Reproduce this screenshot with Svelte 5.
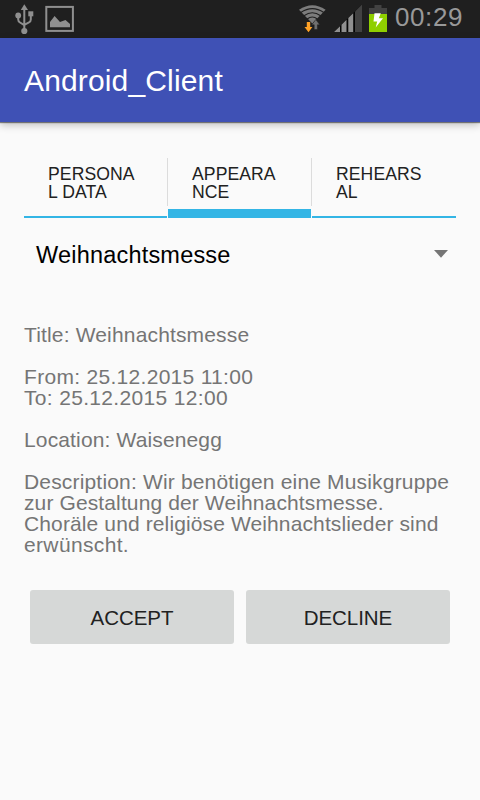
<script>
  const tabs = [
    { label: 'PERSONA\nL DATA', active: false },
    { label: 'APPEARA\nNCE', active: true },
    { label: 'REHEARS\nAL', active: false }
  ];
  const details = [
    { text: 'Title: Weihnachtsmesse', spacing: 0.16 },
    { text: '', spacing: 0 },
    { text: 'From: 25.12.2015 11:00', spacing: 0.3 },
    { text: 'To: 25.12.2015 12:00', spacing: 0.33 },
    { text: '', spacing: 0 },
    { text: 'Location: Waisenegg', spacing: 0.14 },
    { text: '', spacing: 0 },
    { text: 'Description: Wir benötigen eine Musikgruppe', spacing: 0.17 },
    { text: 'zur Gestaltung der Weihnachtsmesse.', spacing: 0.12 },
    { text: 'Choräle und religiöse Weihnachtslieder sind', spacing: 0.12 },
    { text: 'erwünscht.', spacing: 0.35 }
  ];
</script>

<div class="screen">
  <div class="status">
    <svg width="100" height="38" viewBox="0 0 100 38">
      <g fill="#8f8f8f">
        <path d="M24.3 4.3L28 10H20.8Z" />
        <circle cx="24.3" cy="31" r="3.1" />
        <circle cx="18.2" cy="15.5" r="2.9" />
        <rect x="28.3" y="11.3" width="5" height="5" />
      </g>
      <path d="M24.3 8V30M18.2 16V19.5Q18.2 21.5 20 22.5L24.3 25.2M30.8 16V19.5Q30.8 21.5 29 22.3L24.3 24.8" fill="none" stroke="#8f8f8f" stroke-width="2" />
      <rect x="46.3" y="6.9" width="26.6" height="24" fill="none" stroke="#8f8f8f" stroke-width="2" />
      <path d="M50 27.3V22L54.6 16L60 22L65.5 20L70 24V27.3Z" fill="#8f8f8f" />
    </svg>
    <svg class="right" width="98" height="38" viewBox="294 0 98 38">
      <path d="M299 9.8Q312.3 .6 325.6 9.8L312.3 23.6Z" fill="#7c7c7c" />
      <g fill="none" stroke="#1f1f1f" stroke-width="1.1">
        <path d="M300.8 12.5Q312.3 4.8 323.8 12.5" />
        <path d="M304 15.8Q312.3 9.8 320.6 15.8" />
        <path d="M307.2 19Q312.3 15 317.4 19" />
      </g>
      <path d="M306.8 22H310.2V27H312.4L308.5 32.3L304.5 27H306.8Z" fill="#ffa126" />
      <path d="M314.2 29.5V24.8H311.7L315.8 19.5L319.8 24.8H317.4V29.5Z" fill="#707070" stroke="#1f1f1f" stroke-width=".5" />
      <path d="M334 32L362 4.5V32Z" fill="#050505" />
      <path d="M334 32L340 26.2V32ZM341.5 32V24.8L346.5 19.8V32ZM348.3 32V18L353.2 13.2V32Z" fill="#8f8f8f" />
      <path d="M355 32V11.4L362 4.5V32Z" fill="#424242" />
      <path d="M369 8H374.5V5H381.5V8H387V14H369Z" fill="#424242" />
      <rect x="369" y="14" width="18" height="18" fill="#8fcf00" />
      <path d="M374.5 13.2H380.8L378.8 18.2H383L375.7 27.5L377.2 21.5H373.5Z" fill="#fff" />
    </svg>
    <span class="clock">00:29</span>
  </div>

  <header><h1>Android_Client</h1></header>

  <main>
    <nav>
      {#each tabs as tab}
        <div class="tab" class:active={tab.active}>{tab.label}</div>
      {/each}
    </nav>

    <div class="spinner">
      <span>Weihnachtsmesse</span>
      <svg width="14" height="8" viewBox="0 0 14 8"><path d="M0 0H14L7 7.7Z" fill="#757575" /></svg>
    </div>

    <section class="details">
      {#each details as row}
        <div class="row" style="letter-spacing: {row.spacing}px">{row.text}</div>
      {/each}
    </section>

    <div class="buttons">
      <button>ACCEPT</button>
      <button>DECLINE</button>
    </div>
  </main>
</div>

<style>
  :global(body) { background: #fafafa; }
  .screen {
    width: 480px;
    height: 800px;
    overflow: hidden;
    background: #fafafa;
    font-family: "Liberation Sans", Arial, sans-serif;
  }
  .status {
    display: flex;
    height: 38px;
    background: #1f1f1f;
  }
  .status svg { flex: none; display: block; }
  .right { margin-left: 194px; }
  .clock {
    margin-left: 3px;
    font-size: 26px;
    line-height: 34px;
    color: #999;
    letter-spacing: 0.6px;
  }
  header {
    height: 84px;
    background: #3f51b5;
    padding-left: 24px;
    box-shadow: 0 1px 1px rgba(0, 0, 0, 0.45), 0 3px 8px rgba(0, 0, 0, 0.24);
  }
  h1 {
    margin: 0;
    font-size: 30px;
    font-weight: 400;
    line-height: 85px;
    letter-spacing: 0.15px;
    color: #fff;
  }
  main { padding: 32px 24px 0; }
  nav { display: grid; grid-template-columns: 143px 143px 144px; gap: 1px; height: 64px; }
  .tab {
    box-sizing: border-box;
    padding: 11px 0 0 24px;
    font-size: 17.6px;
    line-height: 18px;
    letter-spacing: 0.08px;
    white-space: pre;
    color: #212121;
    background: linear-gradient(#33b5e5, #33b5e5) 0 62px / 100% 2px no-repeat;
  }
  .tab.active {
    background: linear-gradient(#33b5e5, #33b5e5) 0 55px / 100% 9px no-repeat;
  }
  .tab + .tab { position: relative; }
  .tab + .tab::before {
    content: "";
    position: absolute;
    left: -1px;
    top: 4px;
    width: 1px;
    height: 48px;
    background: #dcdcdc;
  }
  .spinner {
    display: flex;
    justify-content: space-between;
    align-items: center;
    height: 72px;
    padding: 0 8px 0 12px;
    font-size: 23.5px;
    letter-spacing: 0.2px;
    color: #000;
  }
  .spinner span { padding-top: 2px; }
  .details {
    padding-top: 34px;
    font-size: 21px;
    line-height: 21px;
    color: #757575;
  }
  .row { height: 21px; white-space: pre; }
  .buttons {
    display: flex;
    gap: 12px;
    padding: 35px 6px 0;
  }
  button {
    flex: 1;
    height: 54px;
    padding: 2px 0 0;
    border: 0;
    border-radius: 3px;
    background: #d6d8d7;
    color: #212121;
    font: 20.5px "Liberation Sans", Arial, sans-serif;
    letter-spacing: -0.05px;
  }
</style>
